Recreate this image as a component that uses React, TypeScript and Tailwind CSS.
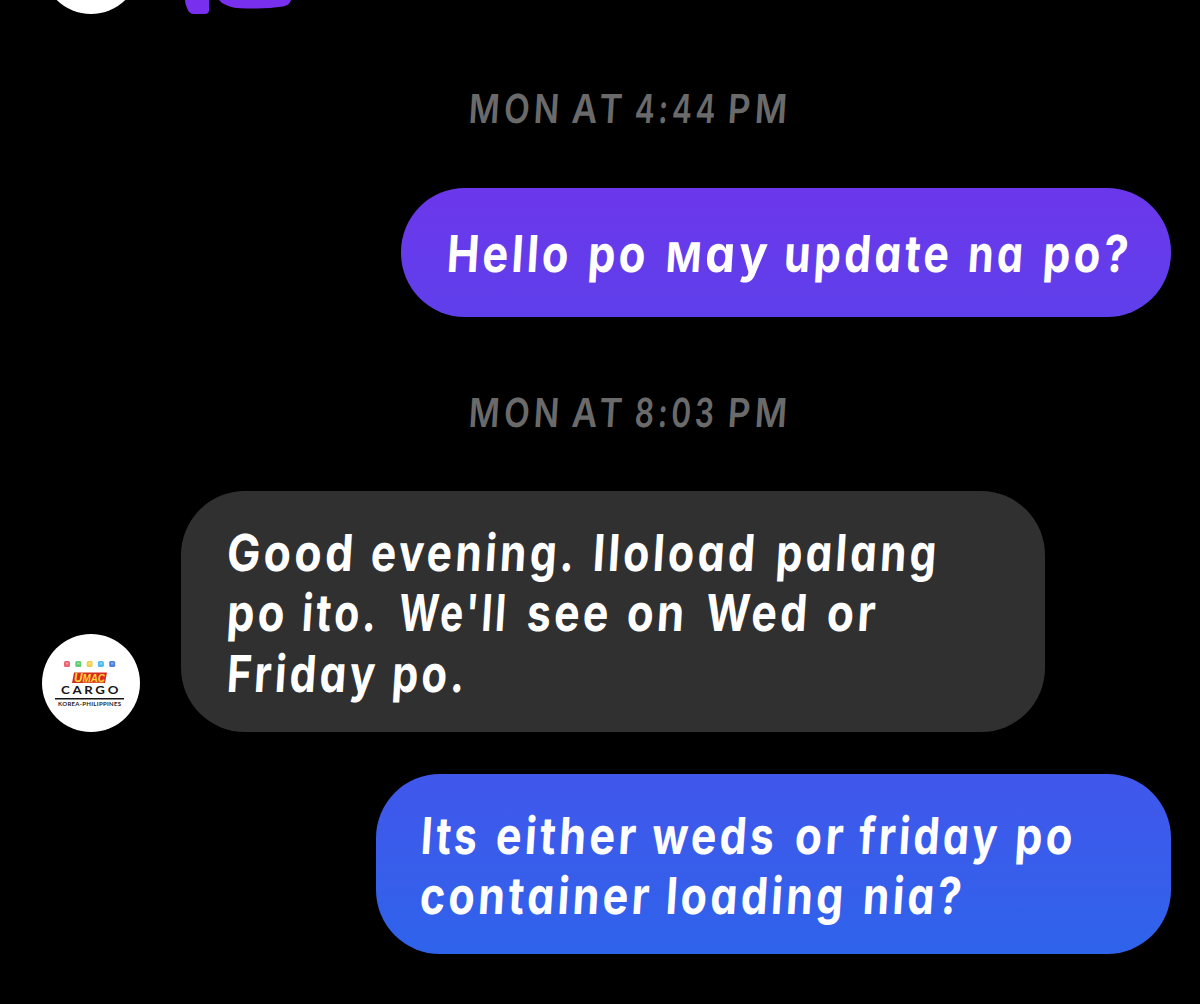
import { useLayoutEffect, useRef, useState } from "react";

type WordSpec = [text: string, start: number, end: number];

/** A word drawn slightly slanted and condensed to fill a given width. */
function Word({ text, width, gap }: { text: string; width: number; gap: number }) {
  const ref = useRef<HTMLSpanElement>(null);
  const [scale, setScale] = useState(0.85);
  useLayoutEffect(() => {
    if (!ref.current) return;
    const spacing = parseFloat(getComputedStyle(ref.current).letterSpacing) || 0;
    setScale((width - 1) / (ref.current.offsetWidth - spacing - 4));
  }, [text, width]);
  return (
    <span className="block shrink-0 whitespace-pre" style={{ width, marginLeft: gap }}>
      <span
        ref={ref}
        className="-ml-[2px] inline-block origin-[0_76%]"
        style={{ transform: `skewX(-3.5deg) scaleX(${scale})` }}
      >
        {text === "May" ? (
          <>
            <span className="text-[41px] leading-none">M</span>ay
          </>
        ) : (
          text
        )}
      </span>
    </span>
  );
}

function Line({ words, left }: { words: WordSpec[]; left: number }) {
  return (
    <div className="flex">
      {words.map(([text, start, end], i) => (
        <Word key={i} text={text} width={end - start} gap={start - (i ? words[i - 1][2] : left)} />
      ))}
    </div>
  );
}

function Stamp({ words }: { words: WordSpec[] }) {
  return (
    <div className="h-[60px] text-[40px] leading-[60px] font-semibold tracking-[5px] text-[#6a6a6a]">
      <Line words={words} left={0} />
    </div>
  );
}

function Avatar() {
  return (
    <svg viewBox="0 0 98 98" className="size-[98px] shrink-0 tracking-normal">
      <circle cx="49" cy="49" r="49" fill="#fff" />
      {["#ea6470", "#62cc72", "#f2d052", "#4dbce6", "#4d80dc"].map((c, i) => (
        <g key={c}>
          <rect x={22 + i * 11.3} y="27" width="6" height="6" rx="1.5" fill={c} />
          <rect x={23.8 + i * 11.3} y="28.5" width="2.5" height="2" fill="#fff" opacity=".35" />
        </g>
      ))}
      <path d="M32 38.500H65L63 49H30Z" fill="#d52c20" />
      <text x="32" y="47.500" fontFamily="Liberation Sans" fontWeight="700" fontStyle="italic" fontSize="10" textLength="31" lengthAdjust="spacingAndGlyphs" fill="#ffd83d">
        <tspan fontSize="12">U</tspan>MAC
      </text>
      <path d="M41 48.200H62" stroke="#f6a33a" strokeWidth=".6" />
      <text x="19" y="60" fontFamily="Lato" fontWeight="700" fontSize="11.500" letterSpacing="2.3" textLength="60" lengthAdjust="spacingAndGlyphs" fill="#161616">
        CARGO
      </text>
      <path d="M13 64.8H82" stroke="#161616" strokeWidth="1.4" />
      <text x="16" y="72.200" fontFamily="Lato" fontWeight="700" fontSize="6" textLength="63" fill="#222">
        KOREA-PHILIPPINES
      </text>
    </svg>
  );
}

export default function App() {
  return (
    <main className="flex h-[1004px] w-[1200px] flex-col overflow-hidden bg-black font-['Inter',sans-serif] text-[51px] leading-[60.5px] font-bold tracking-[4px] text-white [font-feature-settings:'cv11'_1,'calt'_0]">
      <div className="flex h-[14px] items-end pl-[42px]">
        <div className="flex h-[14px] w-[98px] items-end overflow-hidden">
          <div className="size-[98px] shrink-0 rounded-full bg-white" />
        </div>
        <svg viewBox="0 0 110 14" className="ml-[44px] h-[14px] w-[110px]" fill="#792fee">
          <path d="M1 0H25V10Q25 14 21 14H10Q5 14 3 8Q1 4 1 0Z" />
          <path d="M35 0H107Q106 5 99 6.500Q84 9 67 8.500Q49 9 42 5Q37 3 35 0Z" />
        </svg>
      </div>

      <div className="mt-[65px]">
        <Stamp words={[["MON", 470, 558], ["AT", 573, 621], ["4:44", 636, 715], ["PM", 729, 786]]} />
      </div>

      <div className="mt-[49px] mr-[29px] flex h-[129px] w-[770px] flex-col justify-center self-end rounded-[64px] bg-linear-to-b from-[#6b37ea] to-[#5f3feb] pt-1">
        <Line
          left={401}
          words={[["Hello", 448, 567], ["po", 589, 644], ["May", 667, 766], ["update", 785, 948], ["na", 969, 1022], ["po?", 1044, 1127]]}
        />
      </div>

      <div className="mt-[66px]">
        <Stamp words={[["MON", 470, 558], ["AT", 573, 621], ["8:03", 636, 713], ["PM", 729, 786]]} />
      </div>

      <div className="mt-[48px] flex items-end pl-[42px]">
        <Avatar />
        <div className="ml-[41px] flex h-[241px] w-[864px] flex-col justify-center rounded-[64px] bg-[#303030] pt-1">
          <Line left={181} words={[["Good", 228, 352], ["evening.", 372, 573], ["Iloload", 594, 754], ["palang", 777, 935]]} />
          <Line
            left={181}
            words={[["po", 228, 283], ["ito.", 303, 375], ["We'll", 400, 505], ["see", 528, 607], ["on", 628, 683], ["Wed", 707, 806], ["or", 828, 874]]}
          />
          <Line left={181} words={[["Friday", 228, 374], ["po.", 393, 463]]} />
        </div>
      </div>

      <div className="mt-[42px] mr-[29px] flex h-[180px] w-[795px] flex-col justify-center self-end rounded-[64px] bg-linear-to-b from-[#4057eb] to-[#2e63eb] pt-1">
        <Line
          left={376}
          words={[["Its", 422, 476], ["either", 497, 635], ["weds", 653, 773], ["or", 796, 842], ["friday", 860, 996], ["po", 1016, 1071]]}
        />
        <Line left={376} words={[["container", 421, 648], ["loading", 667, 842], ["nia?", 864, 960]]} />
      </div>
    </main>
  );
}
